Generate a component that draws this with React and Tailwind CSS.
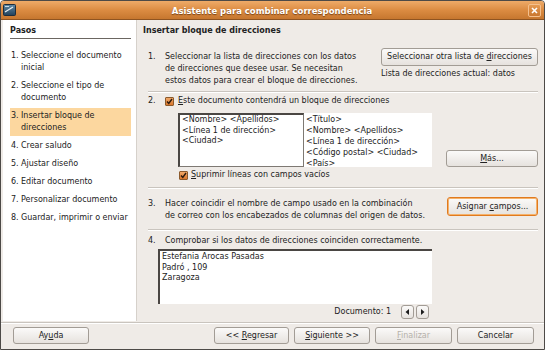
import React from "react";

const font = { fontFamily: '"DejaVu Sans", "Liberation Sans", sans-serif' };

function Btn({ children, className = "", disabled = false, focus = false }) {
  return (
    <div
      className={
        "flex items-center justify-center rounded-[3px] border bg-gradient-to-b from-[#fbfaf9] to-[#e6e2de] " +
        (focus ? "border-[#e07a1f] shadow-[inset_0_0_0_1px_#f5b26b] " : "border-[#a29c95] ") +
        (disabled ? "text-[#b5b0aa] " : "text-[#222] ") +
        className
      }
    >
      {children}
    </div>
  );
}

function Check() {
  return (
    <div className="w-[9px] h-[9px] border border-[#8c5a2c] bg-gradient-to-b from-[#f0a868] to-[#d9762a] flex items-center justify-center rounded-[1px]">
      <svg width="7" height="7" viewBox="0 0 7 7">
        <path d="M1 3.5 L2.8 5.5 L6 1" stroke="#2a1a0e" strokeWidth="1.4" fill="none" />
      </svg>
    </div>
  );
}

function U({ children }) {
  return <span className="underline underline-offset-1">{children}</span>;
}

function Sep({ className = "" }) {
  return <div className={"h-[2px] border-t border-b border-t-[#c9c4be] border-b-white " + className} />;
}

export default function App() {
  const steps = [
    ["1.", ["Seleccione el documento", "inicial"]],
    ["2.", ["Seleccione el tipo de", "documento"]],
    ["3.", ["Insertar bloque de", "direcciones"], true],
    ["4.", ["Crear saludo"]],
    ["5.", ["Ajustar diseño"]],
    ["6.", ["Editar documento"]],
    ["7.", ["Personalizar documento"]],
    ["8.", ["Guardar, imprimir o enviar"]],
  ];
  return (
    <div
      className="w-[545px] h-[350px] overflow-hidden bg-[#efebe7] text-[8px] leading-[12px] text-[#222] flex flex-col border border-[#4d4a47] rounded-t-[4px]"
      style={font}
    >
      {/* Title bar */}
      <div className="h-[19px] shrink-0 flex items-center bg-gradient-to-b from-[#eeab68] via-[#dc8c42] to-[#c6772f] border-b border-[#8f5421]">
        <div className="ml-[2px] w-[13px] h-[12px]">
          <svg width="13" height="12" viewBox="0 0 13 12">
            <defs>
              <linearGradient id="ic" x1="0" y1="0" x2="0" y2="1">
                <stop offset="0" stopColor="#5f8aa6" />
                <stop offset="1" stopColor="#21405a" />
              </linearGradient>
            </defs>
            <rect x="0.5" y="0.5" width="12" height="11" rx="1" fill="url(#ic)" stroke="#1b2d3d" />
            <path d="M2 8 L10 3" stroke="#e8f0f4" strokeWidth="1.2" />
            <rect x="2" y="2" width="4" height="1" fill="#c8dbe6" />
          </svg>
        </div>
        <div className="flex-1 text-center font-bold text-white text-[8.5px] pt-[1px] [text-shadow:0_1px_1px_#7a4316]">
          Asistente para combinar correspondencia
        </div>
        <div className="mr-[3px] w-[13px] h-[13px] rounded-[2px] border border-[#f4c08e] bg-gradient-to-b from-[#e59a52] to-[#c9772f] flex items-center justify-center">
          <svg width="7" height="7" viewBox="0 0 7 7">
            <path d="M1 1 L6 6 M6 1 L1 6" stroke="#fff" strokeWidth="1.6" />
          </svg>
        </div>
      </div>

      {/* Main area */}
      <div className="flex h-[301px] shrink-0">
        {/* Left steps */}
        <div className="w-[134px] ml-[2px] bg-white border-r border-[#d6d1cb] pl-[7px] pr-[5px] pt-[5px]">
          <div className="font-bold border-b border-[#6b6661] pb-[1px]">Pasos</div>
          <div className="flex flex-col gap-[6px] mt-[11px]">
            {steps.map(([n, lines, active]) => (
              <div
                key={n}
                className={"flex px-[1px] " + (active ? "bg-[#fcd79f] -my-[2px] py-[2px]" : "")}
              >
                <span className="w-[10px] shrink-0">{n}</span>
                <span>
                  {lines.map((l, i) => (
                    <div key={i}>{l}</div>
                  ))}
                </span>
              </div>
            ))}
          </div>
        </div>

        {/* Right content */}
        <div className="flex-1 pl-[6px] pr-[6px] pt-[5px] flex flex-col">
          <div className="font-bold">Insertar bloque de direcciones</div>

          <div className="ml-[5px] flex flex-col">
            {/* Section 1 */}
            <div className="flex mt-[11px]">
              <span className="w-[17px] shrink-0 pt-[3px]">1.</span>
              <div className="pt-[3px]">
                <div>Seleccionar la lista de direcciones con los datos</div>
                <div>de direcciones que desee usar. Se necesitan</div>
                <div>estos datos para crear el bloque de direcciones.</div>
              </div>
              <div className="ml-auto flex flex-col w-[157px]">
                <Btn className="h-[18px] w-[157px]">
                  <span>
                    Seleccionar otra lista de <U>d</U>irecciones
                  </span>
                </Btn>
                <div className="mt-[2px]">Lista de direcciones actual: datos</div>
              </div>
            </div>

            <Sep className="mt-[4px]" />

            {/* Section 2 */}
            <div className="flex mt-[2px] items-center">
              <span className="w-[17px] shrink-0">2.</span>
              <Check />
              <span className="ml-[4px]">
                <U>E</U>ste documento contendrá un bloque de direcciones
              </span>
            </div>
            <div className="flex mt-[6px] ml-[30px] items-end">
              <div className="w-[126px] h-[54px] bg-white border border-[#7e7973] border-l-2 border-t-2 border-l-[#4a4643] border-t-[#4a4643] px-[2px] leading-[10.5px]">
                <div>&lt;Nombre&gt; &lt;Apellidos&gt;</div>
                <div>&lt;Línea 1 de dirección&gt;</div>
                <div>&lt;Ciudad&gt;</div>
              </div>
              <div className="w-[128px] h-[54px] bg-white px-[2px] pt-[1px] leading-[11px] self-start">
                <div>&lt;Título&gt;</div>
                <div>&lt;Nombre&gt; &lt;Apellidos&gt;</div>
                <div>&lt;Línea 1 de dirección&gt;</div>
                <div>&lt;Código postal&gt; &lt;Ciudad&gt;</div>
                <div>&lt;País&gt;</div>
              </div>
              <Btn className="ml-auto w-[92px] h-[17px]">
                <span>
                  <U>M</U>ás...
                </span>
              </Btn>
            </div>
            <div className="flex mt-[2px] ml-[31px] items-center">
              <Check />
              <span className="ml-[3px]">
                <U>S</U>uprimir líneas con campos vacíos
              </span>
            </div>

            <Sep className="mt-[6px]" />

            {/* Section 3 */}
            <div className="flex mt-[8px]">
              <span className="w-[17px] shrink-0 pt-[1px]">3.</span>
              <div className="pt-[1px]">
                <div>Hacer coincidir el nombre de campo usado en la combinación</div>
                <div>de correo con los encabezados de columnas del origen de datos.</div>
              </div>
              <Btn focus className="ml-auto w-[91px] h-[19px]">
                <span>
                  Asignar <U>c</U>ampos...
                </span>
              </Btn>
            </div>

            <Sep className="mt-[7px]" />

            {/* Section 4 */}
            <div className="flex mt-[4px]">
              <span className="w-[17px] shrink-0">4.</span>
              <span>Comprobar si los datos de direcciones coinciden correctamente.</span>
            </div>
            <div className="ml-[10px] w-[274px] flex flex-col">
              <div className="mt-[2px] h-[55px] bg-white border-l-2 border-t-2 border-[#4a4643] px-[2px] pt-[1px] leading-[10.5px]">
                <div>Estefania Arocas Pasadas</div>
                <div>Padró , 109</div>
                <div>Zaragoza</div>
              </div>
              <div className="flex justify-end items-center mt-[1px] pr-[3px]">
                <span className="mr-[10px]">Documento: 1</span>
                <Btn className="w-[13px] h-[14px]">
                  <svg width="5" height="6" viewBox="0 0 5 6">
                    <path d="M4 0 L0.5 3 L4 6 Z" fill="#1c1c1c" />
                  </svg>
                </Btn>
                <Btn className="w-[13px] h-[14px] ml-[2px]">
                  <svg width="5" height="6" viewBox="0 0 5 6">
                    <path d="M1 0 L4.5 3 L1 6 Z" fill="#1c1c1c" />
                  </svg>
                </Btn>
              </div>
            </div>
          </div>
        </div>
      </div>

      <Sep className="mt-[1px]" />

      {/* Bottom buttons */}
      <div className="flex items-center pt-[3px] pl-[12px] pr-[10px]">
        <Btn className="w-[76px] h-[17px]">
          <span>
            Ay<U>u</U>da
          </span>
        </Btn>
        <div className="ml-auto flex gap-[5px]">
          <Btn className="w-[75px] h-[17px]">
            <span>
              &lt;&lt; <U>R</U>egresar
            </span>
          </Btn>
          <Btn className="w-[76px] h-[17px]">
            <span>
              <U>S</U>iguiente &gt;&gt;
            </span>
          </Btn>
          <Btn disabled className="w-[77px] h-[17px]">
            <span>
              <U>F</U>inalizar
            </span>
          </Btn>
          <Btn className="w-[77px] h-[17px]">
            <span>Cancelar</span>
          </Btn>
        </div>
      </div>
    </div>
  );
}
